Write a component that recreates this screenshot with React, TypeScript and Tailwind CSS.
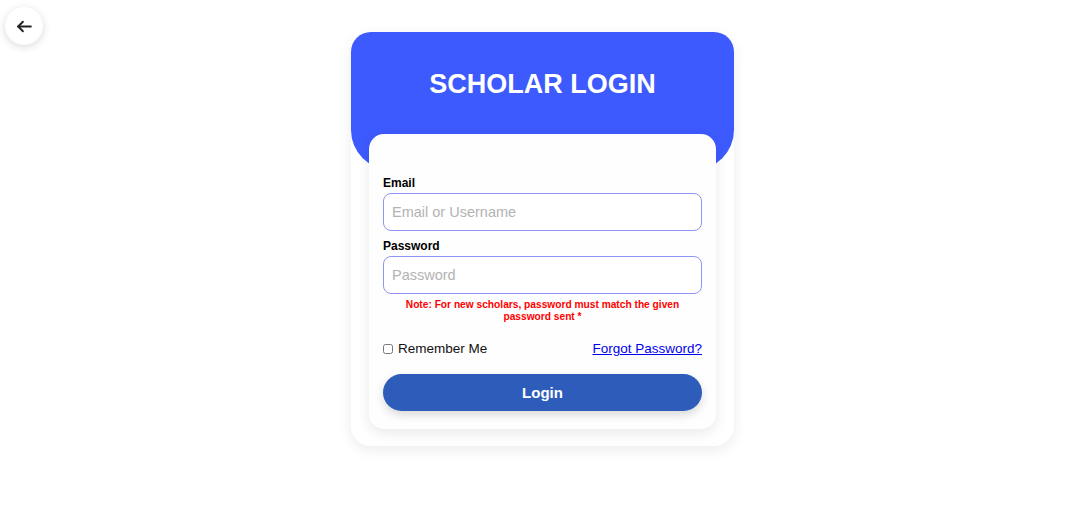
import React from "react";

export default function App() {
  const font = { fontFamily: '"Liberation Sans", Arial, sans-serif' };
  return (
    <div className="relative w-full min-h-[530px] bg-white" style={font}>
      <button className="absolute left-[5px] top-[7px] w-[38px] h-[38px] rounded-full bg-white shadow-[0_2px_8px_rgba(0,0,0,0.15)] flex items-center justify-center">
        <svg width="19" height="19" viewBox="0 0 24 24" fill="none" stroke="#222" strokeWidth="2.4" strokeLinecap="round" strokeLinejoin="round">
          <path d="M20 12H4" />
          <path d="M10 6l-6 6 6 6" />
        </svg>
      </button>
      <div className="flex justify-center pt-[32px] pl-[4px]">
        <div className="w-[383px] bg-white rounded-[20px] shadow-[0_4px_14px_rgba(0,0,0,0.08)] pb-[17px]">
          <div className="h-[138px] bg-[#3d5afe] rounded-t-[20px] rounded-b-[40px] pt-[35px] flex justify-center">
            <h1 className="text-white font-bold text-[27px] leading-[34px] m-0">SCHOLAR LOGIN</h1>
          </div>
          <div className="mx-[18px] -mt-[36px] relative bg-[#fefefe] rounded-[15px] shadow-[0_4px_14px_rgba(0,0,0,0.09)] px-[14px] pt-[42px] pb-[18px]">
            <label className="block font-bold text-[12px] leading-[14px] text-black mb-[3px]">Email</label>
            <input
              className="block w-full h-[38px] rounded-[8px] border border-[#8f94f7] px-[8px] text-[14.5px] placeholder:text-[#b3b3b3] outline-none bg-white"
              placeholder="Email or Username"
            />
            <label className="block font-bold text-[12px] leading-[14px] text-black mt-[8px] mb-[3px]">Password</label>
            <input
              type="password"
              className="block w-full h-[38px] rounded-[8px] border border-[#8f94f7] px-[8px] text-[14.5px] placeholder:text-[#b3b3b3] outline-none bg-white"
              placeholder="Password"
            />
            <p className="text-center text-[#ff0000] font-bold text-[10.2px] leading-[12px] mt-[5px] px-[14px]">
              Note: For new scholars, password must match the given password sent *
            </p>
            <div className="flex items-center justify-between mt-[16px]">
              <label className="flex items-center gap-[5px] text-[13.5px] text-[#111]">
                <input type="checkbox" className="w-[10px] h-[10px] m-0" />
                Remember Me
              </label>
              <a href="#" className="text-[13.5px] text-[#0000ee] underline">Forgot Password?</a>
            </div>
            <button className="mt-[15px] w-full h-[37px] rounded-full bg-[#2e5cbb] text-white font-bold text-[15px] shadow-[0_4px_10px_rgba(0,0,0,0.15)]">
              Login
            </button>
          </div>
        </div>
      </div>
    </div>
  );
}
